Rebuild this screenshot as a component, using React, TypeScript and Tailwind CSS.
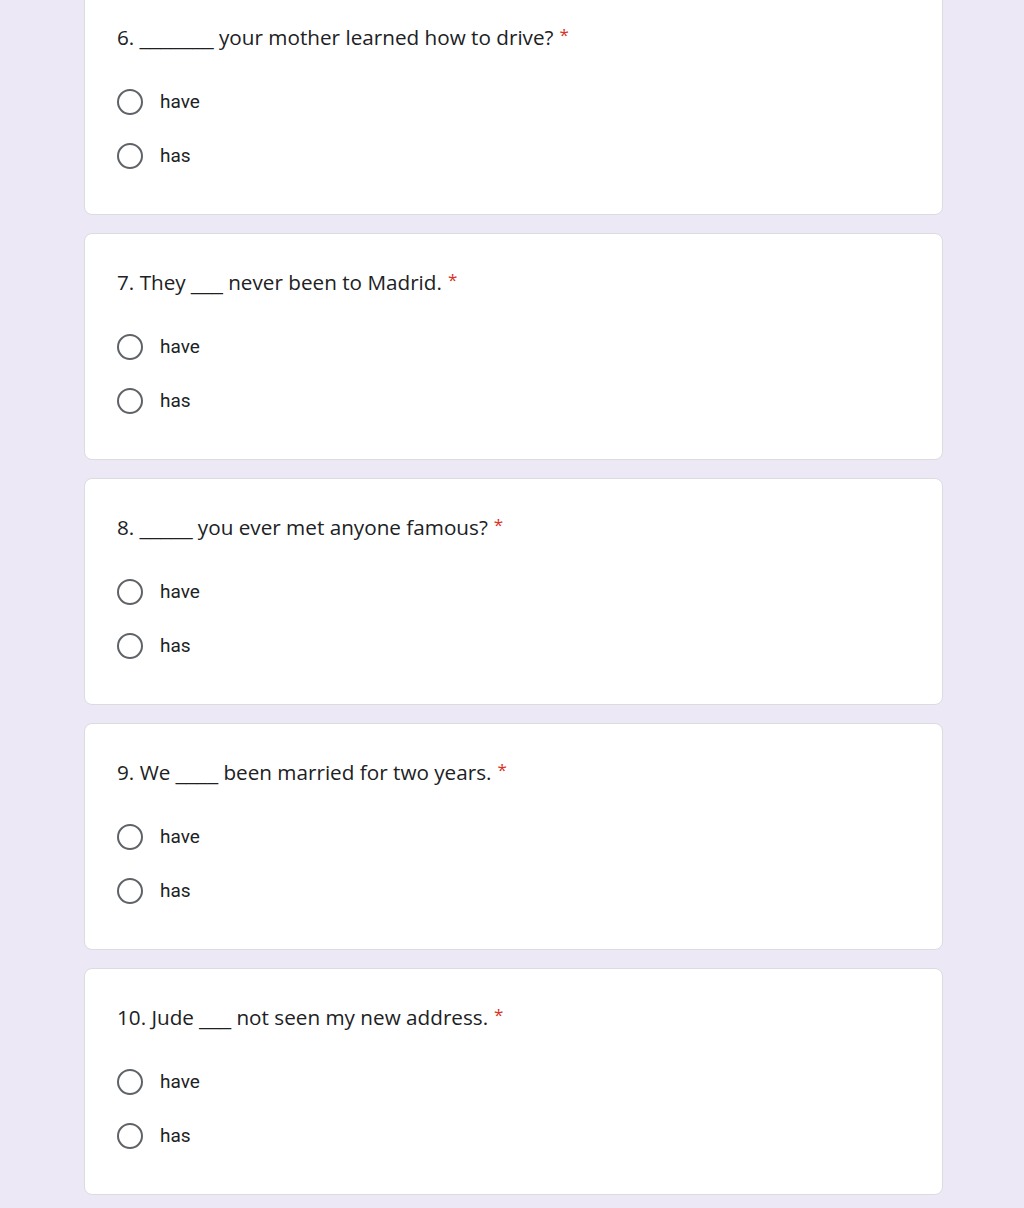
import React from "react"

type Question = {
  num: string
  before: string
  blank: string
  after: string
}

const questions: Question[] = [
  { num: "6.", before: "", blank: "_______", after: "your mother learned how to drive?" },
  { num: "7.", before: "They", blank: "___", after: "never been to Madrid." },
  { num: "8.", before: "", blank: "_____", after: "you ever met anyone famous?" },
  { num: "9.", before: "We", blank: "____", after: "been married for two years." },
  { num: "10.", before: "Jude", blank: "___", after: "not seen my new address." },
]

const options = ["have", "has"]

function QuestionCard({ q, first }: { q: Question; first?: boolean }) {
  return (
    <div
      className={`flex flex-col rounded-lg border border-[#dadce0] bg-white px-[32px] pb-[31px] pt-[34px] ${
        first ? "-mt-[12px]" : ""
      }`}
    >
      <div className="flex h-7 items-center text-[20.7px] leading-7 text-[#202124] [font-family:'Open_Sans',sans-serif]">
        <span className="whitespace-pre">
          {q.num} {q.before ? q.before + " " : ""}
          <span className="text-[19px] leading-none [font-family:'Liberation_Sans',sans-serif]">{q.blank}</span>{" "}
          {q.after}
        </span>
        <span className="ml-[6px] self-start text-[17px] leading-6 text-[#d93025]">*</span>
      </div>
      <div className="mt-6 flex flex-col">
        {options.map((opt) => (
          <label key={opt} className="flex h-[54px] items-center">
            <span className="h-[26px] w-[26px] rounded-full border-[2.5px] border-[#5f6368]" />
            <span className="ml-[17px] text-[19px] text-[#202124] [font-family:Roboto,sans-serif]">{opt}</span>
          </label>
        ))}
      </div>
    </div>
  )
}

export default function App() {
  return (
    <div className="min-h-[1208px] overflow-hidden bg-[#ede8f6]">
      <div className="ml-[84px] flex w-[859px] flex-col gap-[18px] pb-[12px]">
        {questions.map((q, i) => (
          <QuestionCard key={q.num} q={q} first={i === 0} />
        ))}
      </div>
    </div>
  )
}
